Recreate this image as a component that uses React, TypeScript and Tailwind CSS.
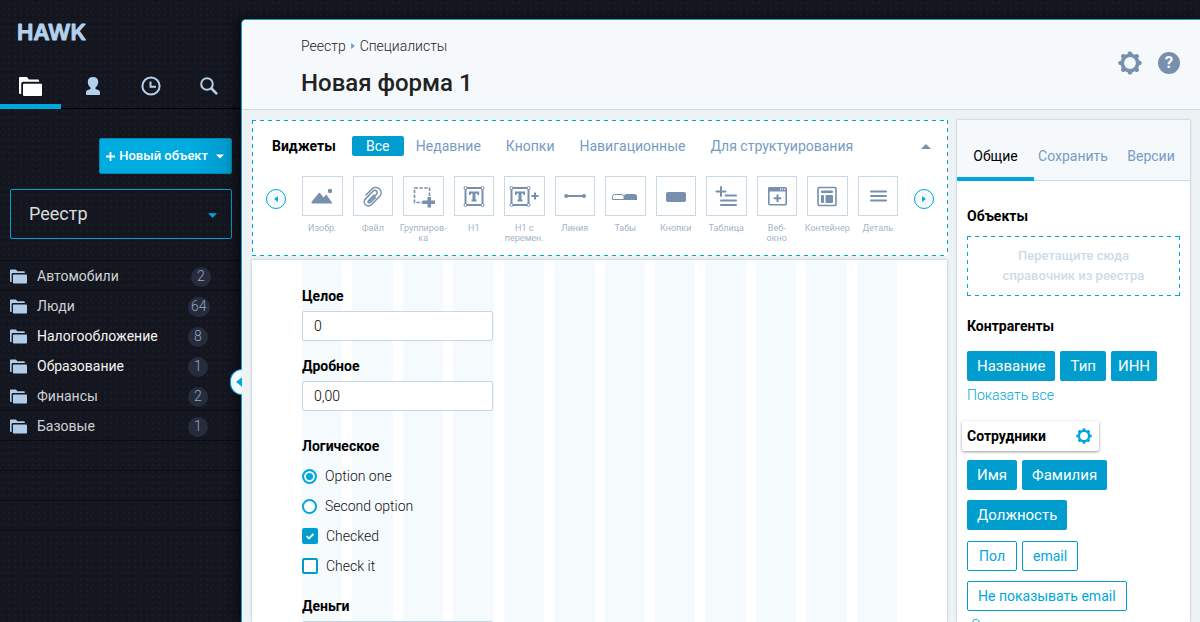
import type { ReactNode } from 'react';

const DASHED =
  'bg-no-repeat bg-[repeating-linear-gradient(90deg,#00a7dc_0_4px,transparent_4px_8px),repeating-linear-gradient(90deg,#00a7dc_0_4px,transparent_4px_8px),repeating-linear-gradient(180deg,#00a7dc_0_4px,transparent_4px_8px),repeating-linear-gradient(180deg,#00a7dc_0_4px,transparent_4px_8px)] bg-[position:left_top,left_bottom,left_top,right_top] bg-[size:100%_1px,100%_1px,1px_100%,1px_100%]';

function Folders({ className }: { className: string }) {
  return (
    <svg viewBox="0 0 23 19" className={className} fill="currentColor" aria-hidden="true">
      <path d="M1 0h6.500q.8 0 1.200.7L9.800 2.500H19q1 0 1 1V4.800H4.200A2 2 0 0 0 2.200 6.800V17H1q-1 0-1-1V1Q0 0 1 0Z" />
      <path d="M5 6.800h17q1 0 1 1V18q0 1-1 1H5q-1 0-1-1V7.800q0-1 1-1Z" />
    </svg>
  );
}

function Gear({ className }: { className: string }) {
  return (
    <svg viewBox="0 0 24 24" className={className} aria-hidden="true">
      <circle cx="12" cy="12" r="7.700" fill="none" stroke="currentColor" strokeWidth="3.600" />
      {[0, 45, 90, 135, 180, 225, 270, 315].map((a) => (
        <path key={a} d="M9.200 4 10.200 1.200q.3-.8 1.100-.8h1.400q.8 0 1.100.8L14.800 4Z" fill="currentColor" transform={`rotate(${a} 12 12)`} />
      ))}
    </svg>
  );
}

function Triangle({ className }: { className: string }) {
  return (
    <svg viewBox="0 0 10 5" className={className} fill="currentColor" aria-hidden="true">
      <path d="M0 0h10L5 5Z" />
    </svg>
  );
}

function SideTriangle({ className }: { className: string }) {
  return (
    <svg viewBox="0 0 5 8" className={className} fill="currentColor" aria-hidden="true">
      <path d="M0 0 5 4 0 8Z" />
    </svg>
  );
}

function Icon({ children }: { children: ReactNode }) {
  return (
    <svg viewBox="0 0 38 38" className="size-[38px] shrink-0 text-[#7690ae]" fill="currentColor" stroke="none" aria-hidden="true">
      {children}
    </svg>
  );
}

function TextFrame({ x }: { x: number }) {
  return (
    <g transform={`translate(${x} 0)`} stroke="currentColor" fill="none">
      <path d="M10.500 11h17v17h-17Z" strokeWidth="2" />
      <g fill="#fff" strokeWidth="1">
        <circle cx="10.500" cy="11" r="1.500" />
        <circle cx="27.500" cy="11" r="1.500" />
        <circle cx="10.500" cy="28" r="1.500" />
        <circle cx="27.500" cy="28" r="1.500" />
      </g>
      <path d="M14.800 18V15.500h8.400V18M16.500 23.500h5" strokeWidth="1.800" />
      <path d="M19 15v8.500" strokeWidth="3" />
    </g>
  );
}

const widgets: { label: string[]; icon: ReactNode }[] = [
  {
    label: ['Изобр.'],
    icon: (
      <>
        <path d="M8.500 25 15.600 16.200q.8-.9 1.600 0L20.500 20.500l2-2.300q.7-.7 1.400 0L29 25.500q.4 1-.5 1h-19q-1.500 0-1-1.500Z" />
        <circle cx="27" cy="14" r="2.200" />
      </>
    ),
  },
  {
    label: ['Файл'],
    icon: (
      <g transform="translate(8.500 9.500) scale(.87)" fill="none" stroke="currentColor" strokeWidth="1.700" strokeLinecap="round">
        <path d="m6.800 18.200 9.300-9.300a2.600 2.600 0 0 0-3.700-3.700l-9 9a4.700 4.700 0 0 0 6.700 6.700l9.800-9.800a6.100 6.100 0 0 0-8.600-8.600" />
        <path d="M11.300 2.500 4 9.800M15 12.500 9 18.500a1.500 1.500 0 0 1-2.200-2.200l6.500-6.500" />
      </g>
    ),
  },
  {
    label: ['Группиров-', 'ка'],
    icon: (
      <>
        <path d="M10.500 11h15v14.500h-15Z" fill="none" stroke="currentColor" strokeWidth="1.600" strokeDasharray="3.400 1.500" />
        <path d="M21 21.500h10v8H21Z" fill="#fff" />
        <path d="M23.500 20h3.500v3.500H31V27h-4v3.500h-3.500V27h-5v-3.500h5Z" />
      </>
    ),
  },
  { label: ['H1'], icon: <TextFrame x={0} /> },
  {
    label: ['H1 с', 'перемен.'],
    icon: (
      <>
        <TextFrame x={-4} />
        <path d="M29 15.500h2v2.500H33.500v2H31v2.500h-2V20h-2.600v-2H29Z" />
      </>
    ),
  },
  {
    label: ['Линия'],
    icon: (
      <>
        <path d="M10 18h18v2H10Z" />
        <circle cx="10.200" cy="19" r="2" />
        <circle cx="28" cy="19" r="2" />
      </>
    ),
  },
  {
    label: ['Табы'],
    icon: (
      <>
        <path d="M6.500 22.500V19.500q0-2 2-2h7.500q2 0 2 2v3Z" fill="none" stroke="currentColor" />
        <path d="M18 23v-3.500q0-2.500 2.500-2.500h8q2.500 0 2.500 2.500V23Z" />
      </>
    ),
  },
  { label: ['Кнопки'], icon: <rect x="9" y="15" width="20" height="10" rx="2" /> },
  {
    label: ['Таблица'],
    icon: (
      <g fill="none" stroke="currentColor" strokeWidth="2" strokeLinecap="round">
        <path d="M9.500 14.500h9M14 10v9M18.500 18.500H29M14 23.500h15M14 28h15" />
      </g>
    ),
  },
  {
    label: ['Веб-', 'окно'],
    icon: (
      <>
        <rect x="10.800" y="10.800" width="17.400" height="17" rx="1" fill="none" stroke="currentColor" strokeWidth="1.600" />
        <path d="M10.500 10h17.500v4.500H10.500Z" />
        <path d="M22 11.500h1.200v1.200H22ZM24 11.500h1.200v1.200H24ZM26 11.500h1.200v1.200H26Z" fill="#fff" />
        <path d="M18.500 17.500h2v2.800h2.800v2h-2.800V25h-2v-2.700h-2.800v-2h2.800Z" />
      </>
    ),
  },
  {
    label: ['Контейнер'],
    icon: (
      <>
        <rect x="10" y="10.500" width="18" height="18" rx="1" fill="none" stroke="currentColor" strokeWidth="1.600" />
        <rect x="13" y="13.500" width="12" height="2.600" rx="1" />
        <rect x="13" y="18" width="3" height="8" rx="1" />
        <rect x="17.500" y="18" width="7.500" height="8" rx="1" />
      </>
    ),
  },
  {
    label: ['Деталь'],
    icon: <path d="M12 14.500h15M12 19h15M12 23.500h15" stroke="currentColor" strokeWidth="2" strokeLinecap="round" />,
  },
];

const registry = [
  { name: 'Автомобили', count: 2, bright: false, line: true, shift: true },
  { name: 'Люди', count: 64, bright: false, line: false, shift: false },
  { name: 'Налогообложение', count: 8, bright: true, line: false, shift: false },
  { name: 'Образование', count: 1, bright: true, line: false, shift: false },
  { name: 'Финансы', count: 2, bright: false, line: true, shift: false },
  { name: 'Базовые', count: 1, bright: false, line: true, shift: false },
];

function Sidebar() {
  return (
    <aside className="flex w-[241px] shrink-0 flex-col">
      <div className="h-16 px-[17px] pt-5">
        <svg viewBox="0 0 80 26" className="h-[26px] w-20" role="img" aria-label="HAWK">
          <text
            x="0"
            y="20"
            className="font-['Inter',sans-serif] text-[22px] font-semibold"
            fill="#b3d0ec"
            stroke="#b3d0ec"
            strokeWidth="1"
            strokeLinejoin="round"
          >
            HAWK
          </text>
        </svg>
      </div>
      <nav className="flex h-[45px] border-b border-black pr-[3px] text-[#b3d0ec]" aria-label="Разделы">
        <button className="-mb-px mr-[3px] flex w-[61px] items-center justify-center border-b-[5px] border-[#00a7dc] pt-1 text-white" aria-label="Реестр">
          <Folders className="h-[19px] w-[23px]" />
        </button>
        <button className="flex flex-1 items-center justify-center" aria-label="Профиль">
          <svg viewBox="0 0 14 18" className="h-[18px] w-3.5" fill="currentColor" aria-hidden="true">
            <path d="M7 0c3.300 0 5.200 1.800 5.200 5 0 2.500-1.200 4.300-2.700 5.600v1.300l3.200 1.300C13.700 13.700 14 14.500 14 16v1.200q0 .8-.8.800H.8q-.8 0-.8-.8V16c0-1.500.3-2.300 1.300-2.800l3.200-1.300v-1.300C3 9.300 1.800 7.500 1.800 5 1.800 1.800 3.700 0 7 0Z" />
          </svg>
        </button>
        <button className="flex flex-1 items-center justify-center" aria-label="История">
          <svg viewBox="0 0 20 20" className="size-5" fill="none" stroke="currentColor" strokeWidth="2" aria-hidden="true">
            <circle cx="10" cy="10" r="8.600" />
            <path d="M9.500 5.500v5.200h5.500" />
          </svg>
        </button>
        <button className="flex flex-1 items-center justify-center" aria-label="Поиск">
          <svg viewBox="0 0 18 18" className="size-[18px]" fill="none" stroke="currentColor" strokeLinecap="round" aria-hidden="true">
            <circle cx="7" cy="7" r="5.800" strokeWidth="2" />
            <path d="m11.500 11.500 4.800 4.800" strokeWidth="2.600" />
          </svg>
        </button>
      </nav>

      <div className="flex flex-col items-end gap-[15px] pt-[29px] pr-[9px] pb-[21px] pl-2.5">
        <button className="flex h-9 items-center rounded-[2px] border border-[#0086b3] bg-linear-to-r from-[#00abdf] from-70% to-[#0099cb] px-1.5 text-[13px] font-medium whitespace-nowrap text-white">
          <svg viewBox="0 0 9 9" className="mr-1 size-[9px]" aria-hidden="true">
            <path d="M4.500 0v9M0 4.500h9" stroke="currentColor" strokeWidth="1.800" />
          </svg>
          Новый объект
          <Triangle className="mr-px ml-2 h-[5px] w-2" />
        </button>
        <div className="relative w-full">
          <select
            aria-label="Раздел"
            className="h-[50px] w-full appearance-none rounded-[2px] border border-[#00a0d4] bg-transparent px-[18px] pb-[2px] text-[18px] text-[#dcdcdc]"
          >
            <option>Реестр</option>
          </select>
          <Triangle className="pointer-events-none absolute top-6 right-[15px] h-[5px] w-[9px] text-[#00a7dc]" />
        </div>
      </div>

      <ul className="border-t border-[#0b0d11]">
        {registry.map((r) => (
          <li key={r.name} className={r.line ? 'border-b border-[#0b0d11]' : 'border-b border-transparent'}>
            <a href="#" className="flex h-[29px] items-center pt-[2px] pr-[30px] pl-2.5">
              <Folders className="h-[15px] w-[17px] text-[#b0cce9]" />
              <span className={r.bright ? 'ml-2.5 flex-1 text-[14px] text-[#f4f4f4]' : 'ml-2.5 flex-1 text-[14px] text-[#cfd1d4]'}>{r.name}</span>
              <span className={r.shift ? 'flex w-[23px] justify-end' : 'flex w-[23px]'}>
                <span className="flex h-5 min-w-5 items-center justify-center rounded-full bg-[#262c3c] px-[3px] text-[14px] font-light text-[#91a9c7]">
                  {r.count}
                </span>
              </span>
            </a>
          </li>
        ))}
        <li className="h-[30px] border-b border-[#0b0d11]" />
        <li className="h-[30px] border-b border-[#0b0d11]" />
        <li className="h-[30px] border-b border-[#0b0d11]" />
      </ul>
    </aside>
  );
}

function Header() {
  return (
    <header className="flex shrink-0 items-center justify-between rounded-tl-[4px] border-b border-[#ccdbe5] bg-[#f5f9fc] pr-5 pl-[59px]">
      <div className="pt-4 pb-2.5">
        <nav className="flex h-5 items-center text-[14px] font-light text-[#1d1d1f]" aria-label="Путь">
          <a href="#">Реестр</a>
          <SideTriangle className="mx-[5px] h-[6px] w-1 text-[#6f9cc8]" />
          <a href="#">Специалисты</a>
        </nav>
        <h1 className="mt-[11px] text-[24px] leading-8 font-medium text-[#222]">Новая форма 1</h1>
      </div>
      <div className="flex items-center gap-4 pb-1 text-[#7690ae]">
        <button aria-label="Настройки">
          <Gear className="size-6" />
        </button>
        <button className="flex size-[22px] items-center justify-center rounded-full bg-[#7690ae] text-[17px] font-bold text-[#f5f9fc]" aria-label="Помощь">
          ?
        </button>
      </div>
    </header>
  );
}

function ScrollButton({ label, flip }: { label: string; flip?: boolean }) {
  return (
    <button
      aria-label={label}
      className="mt-[13px] flex size-5 shrink-0 items-center justify-center rounded-full border border-[#00a7dc] bg-[#f5f9fc] text-[#00a7dc]"
    >
      <SideTriangle className={flip ? 'h-[6px] w-1 rotate-180' : 'h-[6px] w-1'} />
    </button>
  );
}

function WidgetPanel() {
  const tab = 'text-[14px] text-[#769cc4]';
  return (
    <section className={`${DASHED} h-[136px] shrink-0 bg-white px-3.5 pt-4`}>
      <div className="flex h-5 items-center pr-[2px] pl-1.5">
        <h2 className="text-[14px] font-bold text-black">Виджеты</h2>
        <button className="ml-4 h-5 w-[52px] rounded-[2px] bg-[#009dce] text-[14px] text-white">Все</button>
        <div className="ml-3 flex flex-1 gap-[25px] whitespace-nowrap">
          <button className={tab}>Недавние</button>
          <button className={tab}>Кнопки</button>
          <button className={tab}>Навигационные</button>
          <button className={tab}>Для структуирования</button>
        </div>
        <button aria-label="Свернуть" className="p-[1px] text-[#7690ae]">
          <Triangle className="h-[5px] w-2.5 rotate-180" />
        </button>
      </div>
      <div className="mt-5 flex items-start">
        <ScrollButton label="Назад" flip />
        <div className="mx-4 grid flex-1 grid-cols-12 gap-x-2.5">
          {widgets.map((w) => (
            <button key={w.label.join('')} className="flex min-w-0 flex-col items-center">
              <span className="flex h-10 w-full items-center justify-center border border-[#c8d9e5]">
                <Icon>{w.icon}</Icon>
              </span>
              <span className="mt-[7px] text-[9px] leading-[10px] whitespace-nowrap text-[#a5b5c8]">
                {w.label.map((line) => (
                  <span key={line} className="block">
                    {line}
                  </span>
                ))}
              </span>
            </button>
          ))}
        </div>
        <ScrollButton label="Вперёд" />
      </div>
    </section>
  );
}

function Field({ id, label, value }: { id: string; label: string; value: string }) {
  return (
    <div className="flex w-[191px] flex-col gap-[5px]">
      <label htmlFor={id} className="text-[14px] leading-5 font-bold text-black">
        {label}
      </label>
      <input id={id} defaultValue={value} className="h-[30px] w-full rounded-[2px] border border-[#c4d7e6] bg-white px-[11px] text-[14px] font-light text-black" />
    </div>
  );
}

function FormCanvas() {
  const row = 'flex h-[30px] items-center gap-2 text-[14px] font-light text-[#111]';
  const radio = 'size-[15px] shrink-0 appearance-none rounded-full border-2 border-[#00a7dc] bg-white checked:bg-[#00a7dc] checked:shadow-[inset_0_0_0_2px_#fff]';
  const box = 'col-start-1 row-start-1 size-4 appearance-none rounded-[2px] border-2 border-[#009dce] bg-white checked:bg-[#009dce]';
  return (
    <section className="mt-1 mr-px grid flex-1 overflow-hidden bg-white px-[50px] shadow-[0_0_2px_rgba(80,110,130,0.5)]">
      <div className="col-start-1 row-start-1 grid grid-cols-12 gap-x-2.5" aria-hidden="true">
        {widgets.map((w) => (
          <span key={w.label.join('')} className="bg-[#f5fafd]" />
        ))}
      </div>
      <form className="col-start-1 row-start-1 pt-[26px]">
        <div className="flex flex-col gap-[15px]">
          <Field id="whole" label="Целое" value="0" />
          <Field id="fraction" label="Дробное" value="0,00" />
        </div>
        <fieldset className="mt-[25px] mb-[15px]">
          <legend className="mb-[5px] text-[14px] leading-5 font-bold text-black">Логическое</legend>
          <label className={row}>
            <input type="radio" name="option" defaultChecked className={radio} />
            Option one
          </label>
          <label className={row}>
            <input type="radio" name="option" className={radio} />
            Second option
          </label>
          <label className={row}>
            <span className="grid items-center justify-items-center">
              <input type="checkbox" defaultChecked className={box} />
              <svg viewBox="0 0 8 7" className="pointer-events-none col-start-1 row-start-1 h-[7px] w-2" fill="none" stroke="#fff" strokeWidth="1.800" aria-hidden="true">
                <path d="M.6 3.200 3 5.500 7.400 1" />
              </svg>
            </span>
            Checked
          </label>
          <label className={row}>
            <span className="grid">
              <input type="checkbox" className={box} />
            </span>
            Check it
          </label>
        </fieldset>
        <Field id="money" label="Деньги" value="" />
      </form>
    </section>
  );
}

const chipStyles = {
  solid: 'h-[30px] rounded-[2px] bg-[#009dce] px-2.5 text-[15px] text-white',
  tight: 'h-[30px] rounded-[2px] bg-[#009dce] px-[7px] text-[15px] text-white',
  outlined: 'h-[30px] min-w-[50px] rounded-[2px] border border-[#009dce] bg-white px-2.5 text-[14px] text-[#00a7dc]',
};

function Chip({ children, kind = 'solid' }: { children: string; kind?: keyof typeof chipStyles }) {
  return <button className={chipStyles[kind]}>{children}</button>;
}

function Properties() {
  return (
    <aside className="flex w-[233px] shrink-0 flex-col overflow-hidden bg-white shadow-[0_0_2px_rgba(80,110,130,0.5)]">
      <div className="flex h-[61px] shrink-0 border-b border-[#c8d9e5] bg-[#f5f9fc] text-[14px] text-[#769cc4]" role="tablist">
        <button role="tab" aria-selected="true" className="-mb-px w-[77px] border-b-4 border-[#00a7dc] pt-4 text-black">
          Общие
        </button>
        <button role="tab" aria-selected="false" className="w-[78px] pt-3">
          Сохранить
        </button>
        <button role="tab" aria-selected="false" className="flex-1 pt-3">
          Версии
        </button>
      </div>
      <div className="shrink-0 px-2.5 pt-[25px] text-[14px] leading-5">
        <h3 className="font-bold text-black">Объекты</h3>
        <div className={`${DASHED} mt-2.5 flex h-[60px] flex-col justify-center text-center text-[13px] leading-5 font-medium text-[#cddbe7]`}>
          <p>Перетащите сюда</p>
          <p>справочник из реестра</p>
        </div>
        <h3 className="mt-5 font-bold text-black">Контрагенты</h3>
        <div className="mt-[15px] flex flex-wrap gap-[5px]">
          <Chip>Название</Chip>
          <Chip>Тип</Chip>
          <Chip kind="tight">ИНН</Chip>
        </div>
        <a href="#" className="mt-1 block font-light text-[#00a7dc]">
          Показать все
        </a>
        <div className="mt-4 -ml-[5px] flex h-[30px] w-[137px] items-center justify-between rounded-[2px] bg-white pr-[7px] pl-[5px] shadow-[0_1px_3px_rgba(0,0,0,0.4)]">
          <h3 className="font-bold text-black">Сотрудники</h3>
          <button aria-label="Настроить" className="text-[#00a7dc]">
            <Gear className="size-4" />
          </button>
        </div>
        <div className="mt-[9px] flex flex-wrap gap-x-[5px] gap-y-2.5">
          <Chip>Имя</Chip>
          <Chip>Фамилия</Chip>
          <Chip>Должность</Chip>
        </div>
        <div className="mt-[11px] flex flex-wrap gap-x-[5px] gap-y-2.5">
          <Chip kind="outlined">Пол</Chip>
          <Chip kind="outlined">email</Chip>
          <Chip kind="outlined">Не показывать email</Chip>
        </div>
        <a href="#" className="mt-1 ml-1 block font-light text-[#00a7dc]">
          Скрыть
        </a>
      </div>
    </aside>
  );
}

export default function App() {
  return (
    <div className="flex h-screen overflow-hidden bg-[#13161e] bg-[radial-gradient(circle,#191c27_1px,transparent_1px),radial-gradient(circle,#171a25_1px,transparent_1px)] bg-[size:6px_6px,5px_7px] bg-[position:0_0,3px_3px] font-['Roboto',sans-serif]">
      <Sidebar />
      <main className="relative mt-[19px] flex min-w-0 flex-1 flex-col rounded-tl-[5px] border-t border-l border-[#0d9fcb] bg-[#edf2f5] shadow-[-4px_0_12px_rgba(0,0,0,0.6)]">
        <button
          aria-label="Скрыть меню"
          className="absolute top-[349px] -left-3 flex h-[26px] w-3 items-center justify-end rounded-l-full border border-r-0 border-[#00a7dc] bg-[#f5f9fc] text-[#00a7dc]"
        >
          <SideTriangle className="h-2.5 w-1.5 rotate-180" />
        </button>
        <Header />
        <div className="flex min-h-0 flex-1 gap-[9px] px-2.5 pt-2.5">
          <div className="flex min-w-0 flex-1 flex-col">
            <WidgetPanel />
            <FormCanvas />
          </div>
          <Properties />
        </div>
      </main>
    </div>
  );
}
